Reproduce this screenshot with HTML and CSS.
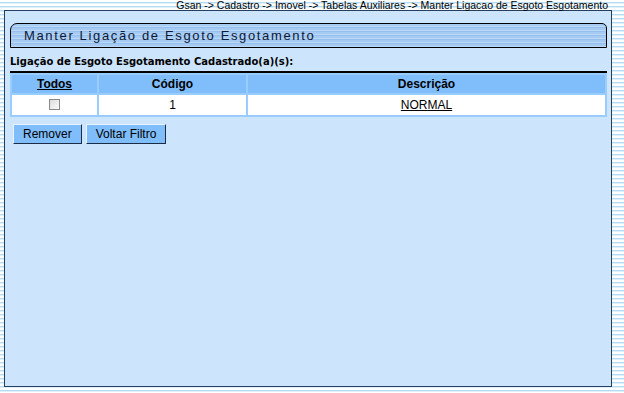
FILE: index.html
```html
<!DOCTYPE html>
<html>
<head>
<meta charset="utf-8">
<link rel="stylesheet" href="styles.css">
</head>
<body>
<div class="crumb">Gsan -&gt; Cadastro -&gt; Imovel -&gt; Tabelas Auxiliares -&gt; Manter Ligacao de Esgoto Esgotamento</div>
<div class="panel">
  <div class="titlebar">Manter Ligação de Esgoto Esgotamento</div>
  <div class="subtitle">Ligação de Esgoto Esgotamento Cadastrado(a)(s):</div>
  <div class="rule"></div>
  <table class="grid">
    <tr class="head">
      <th class="c1"><a href="#">Todos</a></th>
      <th class="c2">Código</th>
      <th class="c3">Descrição</th>
    </tr>
    <tr class="row">
      <td><span class="chk"></span></td>
      <td>1</td>
      <td><a href="#">NORMAL</a></td>
    </tr>
  </table>
  <div class="actions">
    <button class="btn">Remover</button>
    <button class="btn">Voltar Filtro</button>
  </div>
</div>
</body>
</html>
```
FILE: styles.css
```css
html, body {
  margin: 0;
  padding: 0;
}
body {
  width: 624px;
  height: 393px;
  overflow: hidden;
  font-family: "Liberation Sans", Arial, sans-serif;
  background: repeating-linear-gradient(to bottom, #ffffff 0px, #ffffff 2px, #b3dcf3 2px, #b3dcf3 3px, #e0f1fb 3px, #e0f1fb 4px);
}
.crumb {
  font-size: 10.5px;
  line-height: 11px;
  height: 10px;
  text-align: right;
  padding-right: 16px;
  color: #000;
  white-space: nowrap;
}
.panel {
  margin-left: 4px;
  width: 608px;
  border: 1px solid #24405e;
  background: #cce5fc;
  padding: 12px 0 0 5px;
  box-sizing: border-box;
  height: 377px;
}
.titlebar {
  width: 597px;
  height: 25px;
  box-sizing: border-box;
  border: 1px solid #000;
  border-top-left-radius: 7px;
  border-top-right-radius: 5px;
  background: repeating-linear-gradient(to bottom, #a6cbf3 0px, #a6cbf3 2px, #bcd8f7 2px, #bcd8f7 3px, #96bfee 3px, #96bfee 4px);
  font-size: 13px;
  letter-spacing: 1.65px;
  color: #0b1836;
  padding-left: 13px;
  line-height: 24px;
  white-space: nowrap;
}
.subtitle {
  margin-top: 7px;
  font-family: "DejaVu Sans", Verdana, sans-serif;
  font-weight: bold;
  font-size: 10px;
  line-height: 14px;
  color: #000;
  white-space: nowrap;
  height: 14px;
}
.rule {
  margin-top: 2px;
  width: 597px;
  height: 2px;
  background: #000;
}
.grid {
  width: 597px;
  border-collapse: separate;
  border-spacing: 2px;
  background: #99ccff;
  margin-top: 0;
}
.grid th {
  background: #80bdfb;
  font-size: 12px;
  font-weight: bold;
  height: 18px;
  padding: 0;
  text-align: center;
  color: #000;
}
.grid th a {
  color: #000;
}
.c1 { width: 85px; }
.c2 { width: 147px; }
.grid td {
  background: #ffffff;
  height: 20px;
  padding: 0;
  text-align: center;
  font-size: 12px;
  color: #000;
}
.grid td a {
  color: #000;
}
.chk {
  display: inline-block;
  width: 11px;
  height: 11px;
  border: 1px solid #8a8a8a;
  background: linear-gradient(135deg, #dcdcdc, #fbfbfb);
  vertical-align: middle;
  box-sizing: border-box;
  margin-top: -2px;
}
.actions {
  margin-top: 7px;
  padding-left: 3px;
  display: flex;
  gap: 4px;
}
.btn {
  font-family: "Liberation Sans", Arial, sans-serif;
  font-size: 12px;
  height: 20px;
  padding: 0 9px;
  background: #80bdfb;
  border: 1px solid;
  border-color: #e8f4ff #1c2c44 #1c2c44 #e8f4ff;
  color: #000;
  margin: 0;
}
```
